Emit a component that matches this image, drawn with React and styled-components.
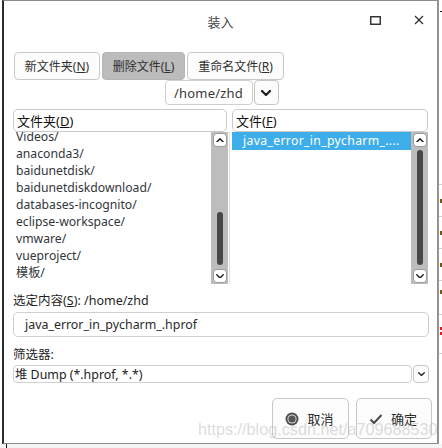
import React from "react";
import styled, { createGlobalStyle } from "styled-components";

const GlobalStyle = createGlobalStyle`
  html, body {
    margin: 0;
    padding: 0;
    background: #ffffff;
  }
  body {
    font-family: "Noto Sans", "Noto Sans CJK SC", sans-serif;
    font-size: 12px;
    color: #232627;
  }
`;

const Page = styled.div`
  width: 442px;
  height: 448px;
  display: flex;
  flex-direction: column;
  overflow: hidden;
  background: #f4f4f4;
`;

const Upper = styled.div`
  display: flex;
  padding-left: 2px;
  background: #ffffff;
`;

// bit of the window behind the dialog, right edge
const SideStrip = styled.div`
  flex: 1;
  border-left: 1px solid #9a9a9a;
  display: flex;
  flex-direction: column;
  padding-top: 11px;
`;

const StripLine = styled.div`
  height: ${(p) => p.$h || 1}px;
  margin-top: ${(p) => p.$gap || 0}px;
  margin-left: ${(p) => p.$indent || 0}px;
  background: ${(p) => p.$color || "#d0d0d0"};
`;

const Bottom = styled.div`
  flex: 1;
  padding-left: 6px;
`;

const Tick = styled.div`
  width: 1px;
  height: 100%;
  background: #111;
`;

const Dialog = styled.div`
  position: relative;
  width: 436px;
  height: 444px;
  box-sizing: border-box;
  border: 1px solid #8c8c8c;
  border-left: 2px solid #2b2b2b;
  background: #ffffff;
  display: flex;
  flex-direction: column;
`;

const TitleBar = styled.div`
  height: 42px;
  display: grid;
  grid-template-columns: 1fr auto 1fr;
  align-items: center;
  padding-bottom: 1px;
`;

const Title = styled.div`
  font-size: 13px;
  color: #444;
  margin-top: -2px;
`;

const WindowControls = styled.div`
  justify-self: end;
  display: flex;
  align-items: center;
  gap: 33px;
  padding-right: 13px;
  margin-top: -4px;
`;

const Body = styled.div`
  flex: 1;
  display: flex;
  flex-direction: column;
  padding: 8px 8px 0 9px;
`;

const ButtonRow = styled.div`
  display: flex;
  gap: 2px;
  padding-left: 1px;
`;

const ToolButton = styled.div`
  width: ${(p) => p.$w}px;
  height: 28px;
  box-sizing: border-box;
  border: 1px solid ${(p) => (p.$pressed ? "#b4b4b4" : "#c9c9c9")};
  border-radius: 4px;
  background: ${(p) => (p.$pressed ? "#bcbcbc" : "#fcfcfc")};
  display: flex;
  align-items: center;
  justify-content: center;
  color: #2f2f2f;
  white-space: nowrap;
`;

const PathRow = styled.div`
  display: flex;
  justify-content: center;
  gap: 1px;
  height: 25px;
  padding-left: 1px;
`;

const PathCombo = styled.div`
  width: 88px;
  box-sizing: border-box;
  border: 1px solid #cfcfcf;
  border-radius: 4px;
  display: flex;
  align-items: center;
  justify-content: center;
  font-size: 13px;
  color: #3a3a3a;
  letter-spacing: 0.2px;
`;

const DropButton = styled.div`
  width: ${(p) => p.$w || 25}px;
  height: ${(p) => p.$h || 25}px;
  box-sizing: border-box;
  border: 1px solid #c6c6c6;
  border-radius: 4px;
  background: #fcfcfc;
  display: flex;
  align-items: center;
  justify-content: center;
`;

const Panels = styled.div`
  display: flex;
  margin-top: 4px;
  height: 175px;
`;

const Panel = styled.div`
  width: ${(p) => (p.$w ? `${p.$w}px` : "auto")};
  flex: ${(p) => (p.$w ? "none" : "1")};
  display: flex;
  flex-direction: column;
  margin-right: ${(p) => p.$right || 0}px;
`;

const Divider = styled.div`
  width: 1px;
  margin: 23px 2px 0 1px;
  background: #dadfe2;
`;

const PanelHeader = styled.div`
  height: 23px;
  box-sizing: border-box;
  border: 1px solid #cacaca;
  border-radius: 5px;
  margin-right: ${(p) => p.$inset || 0}px;
  display: flex;
  align-items: center;
  padding-left: 3px;
  font-size: 13px;
  color: #111;
`;

const ListArea = styled.div`
  flex: 1;
  display: flex;
  overflow: hidden;
`;

const ItemList = styled.div`
  flex: 1;
  overflow: hidden;
  display: flex;
  flex-direction: column;
`;

const ItemScroller = styled.div`
  margin-top: ${(p) => p.$offset || 0}px;
  display: flex;
  flex-direction: column;
`;

const Item = styled.div`
  height: ${(p) => (p.$selected ? 18 : 17)}px;
  line-height: ${(p) => (p.$selected ? 18 : 17)}px;
  padding-left: ${(p) => p.$indent}px;
  background: ${(p) => (p.$selected ? "#3daee9" : "transparent")};
  color: ${(p) => (p.$selected ? "#ffffff" : "#31363b")};
  font-size: 12.2px;
  letter-spacing: ${(p) => (p.$selected ? "0.35px" : "0")};
  white-space: nowrap;
`;

const ScrollTrack = styled.div`
  width: 17px;
  background: #bdbdbd;
  display: flex;
  flex-direction: column;
  align-items: center;
  padding: 1px 0;
  box-sizing: border-box;
`;

const ArrowBtn = styled.div`
  width: 14px;
  height: 14px;
  box-sizing: border-box;
  border-radius: 4px;
  border: 1px solid #9c9c9c;
  background: #ffffff;
  display: flex;
  align-items: center;
  justify-content: center;
`;

const ThumbZone = styled.div`
  flex: 1;
  width: 6px;
  display: flex;
  flex-direction: column;
  padding-top: ${(p) => p.$top}px;
  padding-bottom: 4px;
`;

const Thumb = styled.div`
  flex: 1;
  background: #474747;
  border-radius: 3px;
`;

const Label = styled.div`
  height: 17px;
  line-height: 17px;
  margin-top: ${(p) => p.$gap}px;
  font-size: 12.5px;
  color: #1f1f1f;
`;

const TextField = styled.div`
  height: 25px;
  margin-top: 3px;
  box-sizing: border-box;
  border: 1px solid #cfcfcf;
  border-radius: 5px;
  display: flex;
  align-items: center;
  padding-left: 11px;
  font-size: 12.4px;
  color: #2a2a2a;
`;

const FilterRow = styled.div`
  display: flex;
  height: 18px;
  margin-top: 2px;
  gap: 1px;
`;

const FilterCombo = styled.div`
  flex: 1;
  box-sizing: border-box;
  border: 1px solid #d0d0d0;
  border-radius: 4px;
  display: flex;
  align-items: center;
  padding-left: 1px;
  font-size: 12.4px;
  color: #1c1c1c;
`;

const ActionRow = styled.div`
  display: flex;
  justify-content: flex-end;
  gap: 7px;
  margin-top: 15px;
  margin-right: -3px;
`;

const ActionButton = styled.div`
  width: ${(p) => p.$w}px;
  height: 41px;
  box-sizing: border-box;
  border: 1px solid #c8c8c8;
  border-radius: 5px;
  background: #fcfcfc;
  display: flex;
  align-items: center;
  justify-content: center;
  gap: 8px;
  padding-right: 2px;
  font-size: 13px;
  color: #2a2a2a;
`;

const Watermark = styled.div`
  position: absolute;
  left: 194px;
  top: 419px;
  font-family: "Liberation Sans", Arial, sans-serif;
  font-size: 16.2px;
  color: rgba(170, 170, 170, 0.42);
  white-space: nowrap;
  pointer-events: none;
`;

const Chevron = ({ size = 8, up = false, stroke = 1.8 }) => (
  <svg width={size} height={size * 0.6} viewBox="0 0 10 6">
    <path
      d={up ? "M1 5 L5 1 L9 5" : "M1 1 L5 5 L9 1"}
      fill="none"
      stroke="#1e1e1e"
      strokeWidth={stroke}
      strokeLinecap="round"
      strokeLinejoin="round"
    />
  </svg>
);

const Scrollbar = ({ thumbTop }) => (
  <ScrollTrack>
    <ArrowBtn>
      <Chevron size={8} up />
    </ArrowBtn>
    <ThumbZone $top={thumbTop}>
      <Thumb />
    </ThumbZone>
    <ArrowBtn>
      <Chevron size={8} />
    </ArrowBtn>
  </ScrollTrack>
);

const folders = [
  "Videos/",
  "anaconda3/",
  "baidunetdisk/",
  "baidunetdiskdownload/",
  "databases-incognito/",
  "eclipse-workspace/",
  "vmware/",
  "vueproject/",
  "模板/",
];

const Mn = ({ label, k }) => (
  <>
    {label}(<u>{k}</u>)
  </>
);

export default function App() {
  return (
    <Page>
      <GlobalStyle />
      <Upper>
        <Dialog>
          <TitleBar>
            <span />
            <Title>装入</Title>
            <WindowControls>
              <svg width="11" height="9" viewBox="0 0 11 9">
                <rect x="0.75" y="0.75" width="9.5" height="7.5" fill="none" stroke="#2a2a2a" strokeWidth="1.4" />
              </svg>
              <svg width="10" height="10" viewBox="0 0 10 10">
                <path d="M1 1 L9 9 M9 1 L1 9" stroke="#2a2a2a" strokeWidth="1.2" />
              </svg>
            </WindowControls>
          </TitleBar>

          <Body>
            <ButtonRow>
              <ToolButton $w={86}>
                <Mn label="新文件夹" k="N" />
              </ToolButton>
              <ToolButton $w={83} $pressed>
                <Mn label="删除文件" k="L" />
              </ToolButton>
              <ToolButton $w={97}>
                <Mn label="重命名文件" k="R" />
              </ToolButton>
            </ButtonRow>

            <PathRow>
              <PathCombo>/home/zhd</PathCombo>
              <DropButton>
                <Chevron size={10} stroke={2.2} />
              </DropButton>
            </PathRow>

            <Panels>
              <Panel $w={215}>
                <PanelHeader $inset={1}>
                  <Mn label="文件夹" k="D" />
                </PanelHeader>
                <ListArea>
                  <ItemList>
                    <ItemScroller $offset={-4}>
                      {folders.map((f) => (
                        <Item key={f} $indent={3}>
                          {f}
                        </Item>
                      ))}
                    </ItemScroller>
                  </ItemList>
                  <Scrollbar thumbTop={65} />
                </ListArea>
              </Panel>
              <Divider />
              <Panel $right={1}>
                <PanelHeader>
                  <Mn label="文件" k="F" />
                </PanelHeader>
                <ListArea>
                  <ItemList>
                    <Item $selected $indent={11}>
                      java_error_in_pycharm_....
                    </Item>
                  </ItemList>
                  <Scrollbar thumbTop={3} />
                </ListArea>
              </Panel>
            </Panels>

            <Label $gap={8}>
              <Mn label="选定内容" k="S" />: /home/zhd
            </Label>
            <TextField>java_error_in_pycharm_.hprof</TextField>

            <Label $gap={9}>筛选器:</Label>
            <FilterRow>
              <FilterCombo>堆 Dump (*.hprof, *.*)</FilterCombo>
              <DropButton $w={16} $h={18}>
                <Chevron size={7} stroke={1.8} />
              </DropButton>
            </FilterRow>

            <ActionRow>
              <ActionButton $w={77}>
                <svg width="14" height="14" viewBox="0 0 14 14">
                  <circle cx="7" cy="7" r="6.5" fill="#4d4d4d" />
                  <circle cx="7" cy="7" r="4.6" fill="#d8d8d8" />
                  <circle cx="7" cy="7" r="3.6" fill="#555" />
                </svg>
                取消
              </ActionButton>
              <ActionButton $w={76}>
                <svg width="14" height="12" viewBox="0 0 14 12">
                  <path d="M1.5 6.5 L5 10 L12.5 2" fill="none" stroke="#4a4a4a" strokeWidth="2" />
                </svg>
                确定
              </ActionButton>
            </ActionRow>
          </Body>

          <Watermark>https://blog.csdn.net/a709688530</Watermark>
        </Dialog>

        <SideStrip>
          <StripLine $color="#111" $indent={1} />
          <StripLine $gap={172} />
          <StripLine $gap={14} $h={4} $color="#6b5a10" $indent={1} />
          <StripLine $gap={13} />
          <StripLine $gap={14} $h={4} $color="#6b5a10" $indent={1} />
          <StripLine $gap={13} />
          <StripLine $gap={14} $h={4} $color="#6b5a10" $indent={1} />
          <StripLine $gap={13} />
          <StripLine $gap={9} $h={4} $color="#6b5a10" $indent={1} />
          <StripLine $gap={20} />
          <StripLine $gap={12} $h={3} $color="#e02020" $indent={1} />
          <StripLine $gap={2} $h={3} $color="#e02020" $indent={1} />
          <StripLine $gap={18} />
        </SideStrip>
      </Upper>
      <Bottom>
        <Tick />
      </Bottom>
    </Page>
  );
}
